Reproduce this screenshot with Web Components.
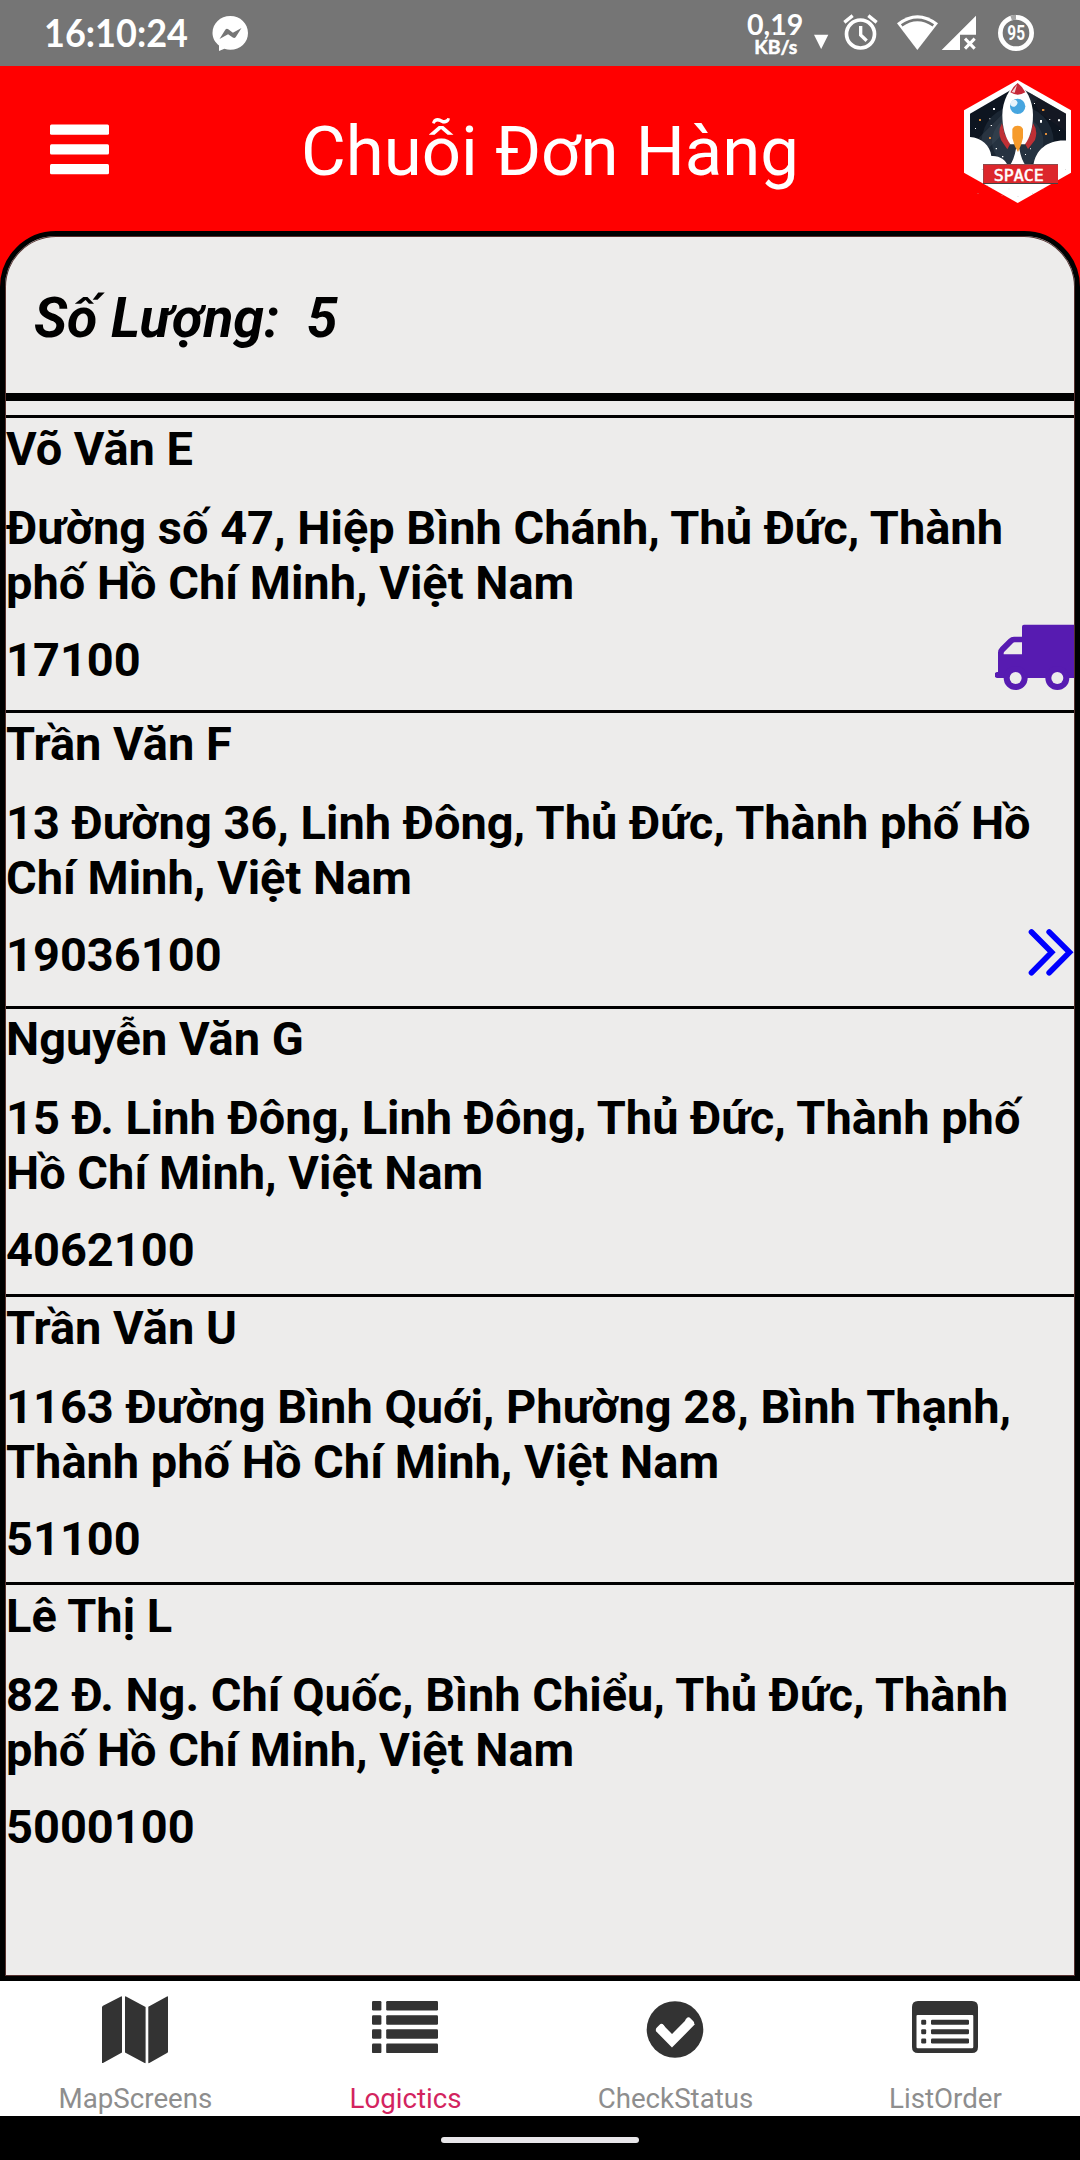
<!DOCTYPE html>
<html lang="vi">
<head>
<meta charset="utf-8">
<title>Chuỗi Đơn Hàng</title>
<style>
html,body{margin:0;padding:0}
body{width:1080px;height:2160px;overflow:hidden;background:#000;font-family:Roboto,"Noto Sans",sans-serif}
</style>
</head>
<body>
<order-app></order-app>
<script>
function define(name, css, html) {
  customElements.define(name, class extends HTMLElement {
    constructor() {
      super();
      this.attachShadow({mode: 'open'}).innerHTML = '<style>*{box-sizing:border-box}svg{display:block}' + css + '</style>' +
        (typeof html === 'function' ? html(this) : html);
    }
  });
}

define('status-bar',
  ':host{display:flex;justify-content:space-between;height:66px;background:#757575;color:#fff}.g{display:flex}svg{fill:#fff}text{font-family:Lato,sans-serif;font-weight:700}',
  `<div class="g">
    <svg width="200" height="66" viewBox="0 0 200 66"><text x="44" y="47" font-size="37.500" textLength="144" lengthAdjust="spacingAndGlyphs">16:10:24</text></svg>
    <svg width="60" height="66" viewBox="200 0 60 66"><path d="M230.3 16c-10 0-17.8 7.4-17.8 17 0 5 2.4 9.300 6.500 12.400V51l5.400-2.200c1.900.6 3.900 1 5.900 1 10 0 17.700-7.300 17.700-16.800S240.300 16 230.300 16z"/><path fill="#757575" d="M219.500 39l5.800-9.200q1.300-1.600 3-.5l4.600 3.400 8.600-4.700-5.700 9.100q-1.300 1.600-3 .5l-4.700-3.400z"/></svg>
  </div>
  <div class="g">
    <svg width="59" height="66" viewBox="78 0 177 198"><text x="81" y="104" font-size="85" textLength="169" lengthAdjust="spacingAndGlyphs">0,19</text><text x="103" y="161" font-size="57" textLength="129" lengthAdjust="spacingAndGlyphs" stroke="#fff" stroke-width="1.500">KB/s</text></svg>
    <svg width="33" height="66" viewBox="255 0 99 198"><path d="M282 104h43l-21.500 43z"/></svg>
    <svg width="50" height="66" viewBox="354 0 150 198"><g fill="none" stroke="#fff"><circle cx="421.500" cy="102" r="42" stroke-width="11"/><path stroke-width="10" d="M422 78v27l18 17M373 67l25-20M445 47l25 20"/></g></svg>
    <svg width="52" height="66" viewBox="504 0 156 198"><path d="M531 70Q592 22 654 70L592 150z"/><path d="M545 76Q592 43 640 76" fill="none" stroke="#757575" stroke-width="8"/></svg>
    <svg width="47" height="66" viewBox="660 0 141 198"><path d="M665 150L768 47V104H720V150z"/><path d="M735 116l29 30M764 116l-29 30" stroke="#fff" stroke-width="9"/></svg>
    <svg width="93" height="66" viewBox="801 0 279 198"><circle cx="888" cy="99" r="47" fill="none" stroke="#fff" stroke-width="14"/><path d="M888 52A47 47 0 0 0 873.500 54.300" fill="none" stroke="#a5a5a5" stroke-width="15"/><text x="862" y="121" font-size="59" textLength="53" lengthAdjust="spacingAndGlyphs" style="font-family:Roboto,sans-serif;font-weight:700">95</text></svg>
  </div>`);

define('space-logo', ':host{display:block;width:107px;height:123px}',
  `<svg width="107" height="123" viewBox="72 60 321 369">
    <defs><clipPath id="sky"><path d="M90 161L233 78L378 161V330H90z"/></clipPath></defs>
    <path fill="#fff" d="M233 60L393 151V338L233 429L72 338V151z"/>
    <g clip-path="url(#sky)">
      <path fill="#0d1520" d="M90 70H378V330H90z"/>
      <circle cx="233" cy="245" r="108" fill="#1b2633"/><circle cx="233" cy="245" r="77" fill="#263341"/>
      <path fill="#55606b" opacity=".25" d="M90 260L270 80H330L90 320z"/>
      <path fill="#1c1c25" opacity=".5" d="M265 90L378 150V215L300 160z"/>
      <path fill="#fff" d="M88 231C122 232 151 256 154 288C178 286 197 299 204 318L90 335zM380 242C328 238 286 266 280 318L380 335z"/>
      <path fill="#fff" d="M228 266Q222 300 208 318H258Q244 300 238 266z"/>
      <g fill="#fff"><path d="M159 144h6v6h-6zM300 180h6v8h-6zM354 178h6v6h-6zM148 175h3v3h-3zM152 195h4v3h-4zM105 204h3v3h-3zM282 129h3v3h-3zM167 264h4v4h-4zM186 288h4v4h-4zM255 282h3v3h-3zM357 210h3v3h-3zM270 265h3v3h-3zM327 178h4v2h-4z"/></g>
      <path fill="#e08c38" d="M117 177h6v6h-6zM147 231h6v6h-6zM306 147h7v6h-7zM315 219h6v6h-6z"/>
    </g>
    <path fill="#bf3035" d="M186 190Q172 212 183 240L202 268L211 251L194 222zM279 190Q295 212 285 240L264 267L255 251L272 222z"/>
    <path fill="#fff" d="M233 69C208 84 187 122 187 165C187 204 197 234 211 253H255C269 234 279 204 279 165C279 122 258 84 233 69z"/>
    <path fill="#c72737" d="M233 69Q218 80 211 97Q233 111 256 97Q248 80 233 69z"/><path fill="#fff" opacity=".8" d="M231 74L215 96L224 98z"/>
    <circle cx="233" cy="139" r="23" fill="#46a5df"/><ellipse cx="222" cy="130" rx="11" ry="9" fill="#e7f3fb" transform="rotate(-40 222 130)"/>
    <path fill="#f69b2c" d="M217 207Q221 197 233 197Q245 197 249 207V234Q244 257 234 276Q222 258 217 234z"/>
    <path fill="#444" d="M129 369H354V372H129z"/><path fill="#dc272c" d="M129 312H354V369H129z"/><path fill="#8c4a4c" d="M129 312H354V315H131V369H129z"/>
    <text x="161" y="362" fill="#fff" font-family="DejaVu Sans Mono,monospace" font-size="45" textLength="150" lengthAdjust="spacingAndGlyphs" stroke="#fff" stroke-width="1.500">SPACE</text>
    <g fill="#bbb"><path d="M113 399h2v2h-2zM158 386h2v2h-2zM142 376h2v2h-2zM185 405h2v2h-2zM206 386h2v2h-2zM233 409h2v2h-2zM276 400h2v2h-2zM308 386h2v2h-2zM376 328h2v2h-2z"/></g>
  </svg>`);

define('app-header',
  `:host{display:flex;align-items:flex-start;height:165px;padding:0 9px 0 50px;color:#fff}
   .menu{margin-top:58px;flex:none}
   h1{flex:1;margin:46px 0 0;padding-left:27px;font-weight:400;font-size:68.900px;line-height:80px;text-align:center;white-space:nowrap}
   space-logo{margin-top:14px;flex:none}`,
  `<svg class="menu" width="59" height="51" viewBox="0 0 59 51" fill="#fff"><rect y=".4" width="59" height="10.300" rx="1.500"/><rect y="20.300" width="59" height="10.300" rx="1.500"/><rect y="40" width="59" height="10.200" rx="1.500"/></svg>
   <h1><slot></slot></h1><space-logo></space-logo>`);

define('truck-icon', ':host{display:block}',
  `<svg width="79" height="67" viewBox="105 72 237 201"><g fill="#571bb1"><path d="M192 74H345V234H113a8 8 0 0 1 0-18h1V158q0-9 7-16l25-25q7-7 16-7h24V80q0-6 6-6zM164 127q-3 0-5 2l-26 26q-2 2-2 5v3h55v-36z" fill-rule="evenodd"/><circle cx="167" cy="234" r="36"/><circle cx="292" cy="234" r="36"/></g><g fill="#edeceb"><circle cx="167" cy="234" r="18"/><circle cx="292" cy="234" r="18"/></g></svg>`);

define('chevrons-icon', ':host{display:block}',
  `<svg width="47" height="48" viewBox="201 84 141 144" fill="none" stroke="#0000fe" stroke-width="17"><path stroke-linecap="round" d="M214.500 96L275 157L214.500 218M267.500 96L328.500 157L267.500 218"/></svg>`);

define('order-row',
  `:host{display:flex;flex-direction:column;height:288.3px;border-top:3px solid #000;padding-top:2.800px;font-weight:700;font-size:46.980px;line-height:55px;color:#000;flex:none}
   :host([tall]){height:295.3px}
   .name{margin-bottom:24px}.addr{margin-bottom:22px;white-space:pre}
   .foot{display:flex;justify-content:space-between;height:55px}`,
  el => `<div class="name">${el.getAttribute('name')}</div><div class="addr">${el.getAttribute('line1')}\n${el.getAttribute('line2')}</div>
   <div class="foot"><span>${el.getAttribute('price')}</span><slot></slot></div>`);

define('order-panel',
  `:host{display:flex;flex-direction:column;height:1750px;background:#edeceb;border:5px solid #000;border-radius:56px 56px 0 0;padding:1px;box-shadow:inset 0 0 0 1px #55302e;overflow:hidden}
   .count{height:156px;padding:50px 0 0 28px;font-size:55.400px;line-height:64px;font-weight:700;font-style:italic;white-space:pre;flex:none}
   .rule{height:8px;background:#000;margin-bottom:14px;flex:none}`,
  el => `<div class="count">Số Lượng:  ${el.getAttribute('count')}</div><div class="rule"></div><slot></slot>`);

const glyphs = {
  map: '<path d="M0 11.500Q0 10.300 1 9.800L19 .4Q20 0 20 1V56.500L1 67Q0 67.400 0 66.500zM23 1Q23 0 24 .500L43.600 11V66.500Q43.600 67.500 42.600 67L23 56.500zM46.300 10.700L65 .4Q66 0 66 1V55.500Q66 56.500 65 57L47.300 67Q46.300 67.500 46.300 66.500z"/>',
  list: [5, 19.2, 33.3, 47.6].map(y => `<rect y="${y}" width="9.400" height="9.500" rx="1.200"/><rect x="14.200" y="${y}" width="51.800" height="9.500" rx="1.200"/>`).join(''),
  check: '<circle cx="33" cy="33.500" r="28.300"/><path fill="none" stroke="#fff" stroke-width="9.500" stroke-linejoin="miter" stroke-linecap="butt" d="M17 31.500L30 44.800L49.500 25"/><path fill="none" stroke="#fff" stroke-width="6" stroke-linejoin="round" stroke-linecap="round" d="M17 33.500L19.500 31M46.500 24.500L49 27"/>',
  order: '<path fill-rule="evenodd" d="M6 5H60Q66 5 66 11V51Q66 57 60 57H6Q0 57 0 51V11Q0 5 6 5zM5.500 19q-1 0-1 1V51q0 1.300 1.300 1.300H60q1.300 0 1.300-1.300V20q0-1-1-1z"/>' +
    [23.8, 33.3, 42.6].map(y => `<rect x="9.200" y="${y}" width="5" height="4.900" rx="1.200"/><rect x="19" y="${y}" width="38" height="4.900" rx="1.200"/>`).join('')
};
define('tab-item',
  `:host{display:flex;flex:1;flex-direction:column;align-items:center;padding-top:15px;color:#8e8e8e}
   :host([active]){color:#d3245f}
   svg{fill:#333}span{margin-top:19px;padding-left:1px;font-size:27.700px;line-height:32px}`,
  el => `<svg width="66" height="68" viewBox="0 0 66 68">${glyphs[el.getAttribute('icon')]}</svg><span><slot></slot></span>`);

define('tab-bar', ':host{display:flex;height:135px;background:#fff}', '<slot></slot>');
define('gesture-bar', ':host{display:flex;justify-content:center;height:44px;padding-top:21px;background:#000}i{width:198px;height:6px;border-radius:3px;background:#e8e6e9}', '<i></i>');

define('order-app', ':host{display:flex;flex-direction:column;height:2160px}.top{background:linear-gradient(#f00 0 320px,#000 320px)}',
  `<status-bar></status-bar>
   <div class="top">
     <app-header>Chuỗi Đơn Hàng</app-header>
     <order-panel count="5">
       <order-row tall name="Võ Văn E" line1="Đường số 47, Hiệp Bình Chánh, Thủ Đức, Thành" line2="phố Hồ Chí Minh, Việt Nam" price="17100"><truck-icon style="margin-top:-8px"></truck-icon></order-row>
       <order-row tall name="Trần Văn F" line1="13 Đường 36, Linh Đông, Thủ Đức, Thành phố Hồ" line2="Chí Minh, Việt Nam" price="19036100"><chevrons-icon style="margin-top:1px"></chevrons-icon></order-row>
       <order-row name="Nguyễn Văn G" line1="15 Đ. Linh Đông, Linh Đông, Thủ Đức, Thành phố" line2="Hồ Chí Minh, Việt Nam" price="4062100"></order-row>
       <order-row name="Trần Văn U" line1="1163 Đường Bình Quới, Phường 28, Bình Thạnh," line2="Thành phố Hồ Chí Minh, Việt Nam" price="51100"></order-row>
       <order-row name="Lê Thị L" line1="82 Đ. Ng. Chí Quốc, Bình Chiểu, Thủ Đức, Thành" line2="phố Hồ Chí Minh, Việt Nam" price="5000100"></order-row>
     </order-panel>
   </div>
   <tab-bar>
     <tab-item icon="map">MapScreens</tab-item>
     <tab-item icon="list" active>Logictics</tab-item>
     <tab-item icon="check">CheckStatus</tab-item>
     <tab-item icon="order">ListOrder</tab-item>
   </tab-bar>
   <gesture-bar></gesture-bar>`);
</script>
</body>
</html>
